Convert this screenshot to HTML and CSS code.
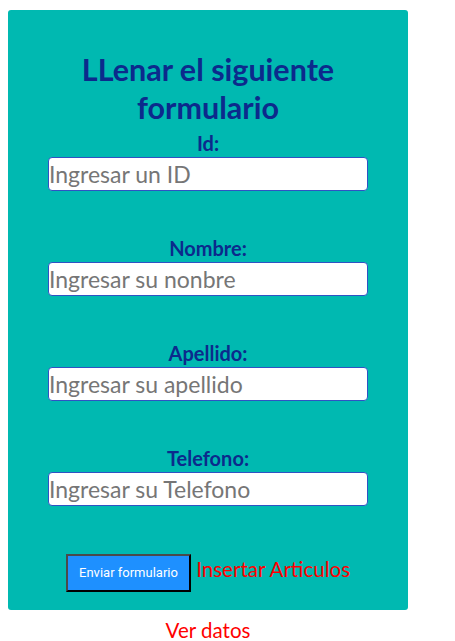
FILE: index.html
```html
<!DOCTYPE html>
<html lang="es">
<head>
<meta charset="utf-8">
<title>Formulario</title>
<link rel="stylesheet" href="styles.css">
</head>
<body>
<div class="wrap">
  <form class="card">
    <h1 class="title">LLenar el siguiente formulario</h1>
    <div class="field">
      <label class="label" for="id">Id:</label>
      <input class="input" id="id" type="text" placeholder="Ingresar un ID">
    </div>
    <div class="field">
      <label class="label" for="nombre">Nombre:</label>
      <input class="input" id="nombre" type="text" placeholder="Ingresar su nonbre">
    </div>
    <div class="field">
      <label class="label" for="apellido">Apellido:</label>
      <input class="input" id="apellido" type="text" placeholder="Ingresar su apellido">
    </div>
    <div class="field">
      <label class="label" for="telefono">Telefono:</label>
      <input class="input" id="telefono" type="text" placeholder="Ingresar su Telefono">
    </div>
    <div class="actions">
      <button class="btn" type="button">Enviar formulario</button>
      <a class="link" href="#">Insertar Articulos</a>
    </div>
  </form>
  <div class="below">
    <a class="link" href="#">Ver datos</a>
  </div>
</div>
</body>
</html>
```
FILE: styles.css
```css
html, body {
  margin: 0;
  padding: 0;
  background: #ffffff;
}
body {
  padding: 10px 8px 0 8px;
  font-family: Lato, "Open Sans", sans-serif;
}
.wrap {
  width: 400px;
}
.card {
  background: #00b9b1;
  border-radius: 3px;
  height: 600px;
  box-sizing: border-box;
  padding-top: 40px;
  display: flex;
  flex-direction: column;
  align-items: center;
}
.title {
  margin: 0;
  width: 320px;
  text-align: center;
  font-size: 30.5px;
  line-height: 38px;
  font-weight: 700;
  color: #0c2a8c;
}
.field {
  display: flex;
  flex-direction: column;
  align-items: center;
  margin-top: 6px;
}
.field + .field {
  margin-top: 46px;
}
.label {
  display: block;
  font-size: 20px;
  line-height: 22px;
  font-weight: 700;
  color: #0c2a8c;
}
.input {
  margin-top: 3px;
  width: 320px;
  height: 34px;
  box-sizing: border-box;
  border: 1px solid #2f52c4;
  border-radius: 4px;
  padding: 0;
  font-family: Lato, "Open Sans", sans-serif;
  font-size: 23px;
  color: #333;
  background: #fff;
}
.input::placeholder {
  color: #767676;
}
.actions {
  margin-top: 44px;
  text-align: center;
  font-size: 20.5px;
  line-height: 38px;
}
.btn {
  width: 125px;
  height: 38px;
  box-sizing: border-box;
  background: #1e90ff;
  color: #ffffff;
  font-family: Roboto, Arial, sans-serif;
  font-size: 13px;
  border-width: 2px;
  border-style: solid;
  border-color: #4a4a4a #000 #000 #4a4a4a;
  padding: 0;
  vertical-align: baseline;
}
.link {
  color: #ff0000;
  text-decoration: none;
}
.below {
  text-align: center;
  font-size: 20.5px;
  line-height: 24px;
  padding-top: 8px;
}
```
